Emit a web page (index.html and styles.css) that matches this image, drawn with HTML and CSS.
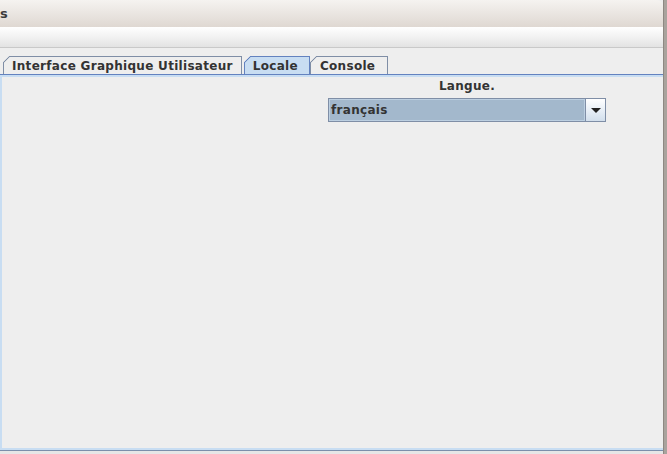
FILE: index.html
```html
<!DOCTYPE html>
<html>
<head>
<meta charset="utf-8">
<link rel="stylesheet" href="styles.css">
</head>
<body>
<div class="screen">
  <div class="window">
    <div class="titlebar"><span class="title">s</span></div>
    <div class="menubar"></div>
    <div class="content">
      <div class="tabs">
        <div class="tab first">Interface Graphique Utilisateur</div>
        <div class="tab selected">Locale</div>
        <div class="tab last">Console</div>
      </div>
      <div class="panel">
        <div class="locale">
          <div class="label">Langue.</div>
          <div class="combo">
            <div class="combo-value">français</div>
            <div class="combo-button"><span class="arrow"></span></div>
          </div>
        </div>
      </div>
      <div class="footer"></div>
    </div>
  </div>
  <div class="edge"></div>
</div>
</body>
</html>
```
FILE: styles.css
```css
html, body {
  margin: 0;
  padding: 0;
  width: 667px;
  height: 454px;
  overflow: hidden;
  background: #eeeeee;
  font-family: "DejaVu Sans", sans-serif;
}

.screen {
  display: flex;
  width: 667px;
  height: 454px;
}

.window {
  flex: 0 0 663px;
  display: flex;
  flex-direction: column;
  height: 454px;
}

.titlebar {
  height: 27px;
  background: linear-gradient(to bottom, #f5f3f0, #ece8e4 40%, #dfd8d2);
  border-top-right-radius: 6px;
  display: flex;
  align-items: center;
}

.title {
  font-weight: bold;
  font-size: 13px;
  color: #3c3c3c;
  margin-left: 0;
}

.menubar {
  height: 20px;
  background: linear-gradient(to bottom, #ffffff, #f3f3f3 45%, #e3e3e3);
  border-bottom: 1px solid #c9c9c9;
}

.content {
  flex: 1;
  display: flex;
  flex-direction: column;
  background: #eeeeee;
}

.tabs {
  display: flex;
  padding: 8px 0 0 3px;
  height: 18px;
}

.tab {
  position: relative;
  height: 17px;
  border: 1px solid #7f8ea6;
  border-bottom: none;
  background: #eeeeee;
  font-size: 12px;
  font-weight: bold;
  letter-spacing: 0.3px;
  color: #333333;
  padding: 0 7px 0 8px;
  line-height: 18px;
  margin-right: 2px;
}

.tab.first {
  padding-right: 8px;
}

.tab.last {
  padding: 0 12px 0 9px;
}

.tab::before {
  content: "";
  position: absolute;
  top: -1px;
  left: -1px;
  width: 7px;
  height: 7px;
  background: linear-gradient(to bottom right, #eeeeee 0, #eeeeee calc(50% - 0.8px), #7f8ea6 calc(50% - 0.3px), #7f8ea6 calc(50% + 0.3px), transparent calc(50% + 0.8px));
}

.tab.selected {
  background: #c8ddf2;
  border-color: #6382bf;
  margin-right: 0;
  padding: 0 11px 0 8px;
}

.tab.selected::before {
  background: linear-gradient(to bottom right, #eeeeee 0, #eeeeee calc(50% - 0.8px), #6382bf calc(50% - 0.3px), #6382bf calc(50% + 0.3px), transparent calc(50% + 0.8px));
}

.panel {
  height: 375px;
  border-top: 1px solid #6382bf;
  box-shadow: inset 0 2px 0 #c8ddf2, inset 2px 0 0 #c8ddf2, inset 0 -2px 0 #c8ddf2;
  display: flex;
}

.locale {
  margin-left: 328px;
  width: 278px;
  display: flex;
  flex-direction: column;
  align-items: stretch;
  padding-top: 3px;
}

.label {
  text-align: center;
  font-size: 12px;
  font-weight: bold;
  letter-spacing: 0.3px;
  color: #333333;
  height: 20px;
  line-height: 17px;
}

.combo {
  display: flex;
  height: 22px;
  border: 1px solid #7f8ea6;
}

.combo-value {
  flex: 1;
  background: #a3b8cc;
  border: 1px solid #bccfe1;
  font-size: 12px;
  font-weight: bold;
  letter-spacing: 0.3px;
  color: #333333;
  line-height: 20px;
  padding-left: 1px;
}

.combo-button {
  width: 19px;
  border-left: 1px solid #7f8ea6;
  background: linear-gradient(to bottom, #ffffff, #e4ecf5 60%, #d2dfec);
  display: flex;
  align-items: center;
  justify-content: center;
}

.arrow {
  width: 0;
  height: 0;
  border-left: 5px solid transparent;
  border-right: 5px solid transparent;
  border-top: 5px solid #222222;
  margin-top: 1px;
}

.footer {
  flex: 1;
  border-top: 1px solid #7b8fab;
  background: #e6e6e6;
}

.edge {
  flex: 0 0 4px;
  background: linear-gradient(to right, #8e8882 0 1px, #a9a39d 1px);
}
```
